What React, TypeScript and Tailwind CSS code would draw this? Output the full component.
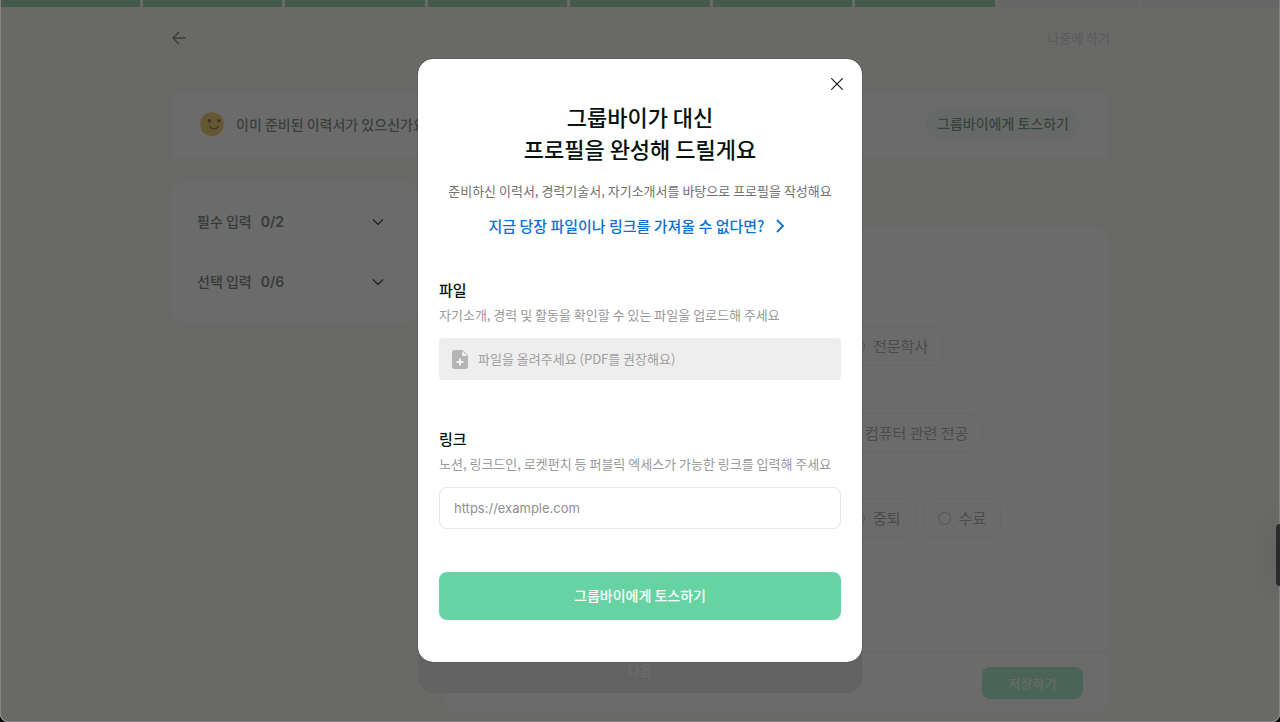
import React from "react";

const STEPS = 9;
const STEPS_DONE = 7;

const sections = [
  { label: "필수 입력", count: "0/2" },
  { label: "선택 입력", count: "0/6" },
];

function Smile() {
  return (
    <svg viewBox="0 0 24 24" className="size-6" aria-hidden="true">
      <rect x="0.300" y="0.500" width="23.400" height="23.400" rx="10.500" fill="#f0d078" />
      <circle cx="9.500" cy="8.800" r="1.800" fill="#8a7a68" />
      <circle cx="19" cy="8.800" r="1.800" fill="#8a7a68" />
      <path d="M10 14.600c1.800 3 6.600 3 8.400 0" fill="none" stroke="#8a7a68" strokeWidth="1.300" strokeLinecap="round" />
    </svg>
  );
}

function FilePlus() {
  return (
    <svg viewBox="0 0 16 19" className="h-[19px] w-4" aria-hidden="true">
      <path d="M2.500 0h8L16 5.600V16.500a2.500 2.500 0 0 1-2.500 2.500h-11A2.500 2.500 0 0 1 0 16.500v-14A2.500 2.500 0 0 1 2.500 0z" fill="#b5b5b5" />
      <path d="M10.200 1v5h5z" fill="#f4f4f4" />
      <path d="M8 8.500v7M4.500 12h7" stroke="#fff" strokeWidth="1.500" fill="none" />
    </svg>
  );
}

function Chevron() {
  return (
    <svg viewBox="0 0 12 12" className="size-3" fill="none" stroke="#444" strokeWidth="1.200" aria-hidden="true">
      <path d="M1 3.500l5 5 5-5" />
    </svg>
  );
}

function Choice({ name, label, round = false }: { name: string; label: string; round?: boolean }) {
  return (
    <label
      className={
        "flex h-10 items-center gap-2 border border-[#f3f3f3] px-[14px] text-[15px] leading-6 text-[#b4b4b4] " +
        (round ? "rounded-2xl" : "rounded-xl")
      }
    >
      <input type="radio" name={name} className="size-[13px] appearance-none rounded-full border border-[#c8c8c8]" />
      {label}
    </label>
  );
}

function ProfilePage() {
  return (
    <div className="flex min-h-screen flex-col bg-[#fafaf6]">
      <div className="flex h-[7px] gap-[3px]">
        {Array.from({ length: STEPS }, (_, i) => (
          <div key={i} className={i < STEPS_DONE ? "flex-1 bg-[#a4d6ad]" : "flex-1 bg-[#f2f2f3]"} />
        ))}
      </div>

      <header className="h-16 border-b border-[#f7f7f2] px-6">
        <div className="mx-auto flex h-[62px] max-w-[940px] items-center justify-between">
          <button type="button" aria-label="뒤로" className="p-0.5">
            <svg viewBox="0 0 14 14" className="size-[14px]" fill="none" stroke="#8f8f8c" strokeWidth="1.400" aria-hidden="true">
              <path d="M14 7H1M7 1L1 7l6 6" />
            </svg>
          </button>
          <button type="button" className="text-[13px] leading-5 text-[#d8d8da]">나중에 하기</button>
        </div>
      </header>

      <main className="mx-auto w-full max-w-[940px] pt-5">
        <section className="flex h-[68px] items-center rounded border border-[#f6f6f6] bg-white pr-7 pb-0.5 pl-[29px]">
          <Smile />
          <p className="ml-3 text-[14px] leading-5 font-medium whitespace-nowrap text-[#8a9690]">이미 준비된 이력서가 있으신가요?</p>
          <button type="button" className="ml-auto rounded-full bg-[#f4faf8] px-3 pt-[5px] pb-[7px] text-[14px] leading-5 font-medium text-[#7fa588]">
            그룹바이에게 토스하기
          </button>
        </section>

        <div className="mt-[22px] flex items-start gap-[26px]">
          <aside className="flex w-[248px] flex-none flex-col rounded-2xl bg-white py-[11px] pr-[34px] pl-[27px]">
            {sections.map((s) => (
              <button key={s.label} type="button" className="flex h-[60px] items-center text-[14px] leading-5 font-medium text-[#848d88]">
                <span className="pb-0.5">{s.label}</span>
                <span className="ml-[9px] font-['Inter',sans-serif] font-semibold">{s.count}</span>
                <span className="ml-auto">
                  <Chevron />
                </span>
              </button>
            ))}
          </aside>

          <section className="mt-[46px] flex-1 rounded-2xl bg-white">
            <div className="flex flex-col items-start pt-[99px] pb-[114px] pl-[393px]">
              <Choice name="degree" label="전문학사" />
              <div className="mt-[47px] -ml-2">
                <Choice name="major" label="컴퓨터 관련 전공" round />
              </div>
              <div className="mt-[45px] flex gap-[7px]">
                <Choice name="status" label="중퇴" />
                <Choice name="status" label="수료" />
              </div>
            </div>
            <div className="flex justify-end border-t border-[#f0f0f0] px-[27px] py-[14px]">
              <button type="button" className="h-8 w-[101px] rounded-lg bg-[#b4eed2] text-[13px] leading-5 text-white">저장하기</button>
            </div>
          </section>
        </div>
      </main>
    </div>
  );
}

function TossDialog() {
  return (
    <div
      role="dialog"
      aria-modal="true"
      aria-labelledby="toss-title"
      className="relative flex flex-col rounded-[15px] bg-white px-[21px] pb-[42px] shadow-[0_0_1px_#000]"
    >
      <div className="-mr-[6px] flex justify-end pt-[15px]">
        <button type="button" aria-label="닫기" className="p-1">
          <svg viewBox="0 0 12 12" className="size-3" fill="none" stroke="#111" strokeWidth="1.100" aria-hidden="true">
            <path d="M0.300 0.300l11.400 11.400M11.700 0.300L0.300 11.700" />
          </svg>
        </button>
      </div>

      <h1 id="toss-title" className="mt-[6px] text-center text-[22px] leading-8 font-medium text-[#04130c]">
        그룹바이가 대신
        <br />
        프로필을 완성해 드릴게요
      </h1>
      <p className="-mx-4 mt-[17px] text-center text-[13px] leading-5 whitespace-nowrap text-[#707070]">
        준비하신 이력서, 경력기술서, 자기소개서를 바탕으로 프로필을 작성해요
      </p>
      <a href="#later" className="mt-[13px] mr-2 flex items-center justify-center gap-[11px] text-[15px] leading-6 font-medium text-[#0f6fd6]">
        지금 당장 파일이나 링크를 가져올 수 없다면?
        <svg viewBox="0 0 8 14" className="h-[14px] w-2" fill="none" stroke="currentColor" strokeWidth="1.800" aria-hidden="true">
          <path d="M1 1l6 6-6 6" />
        </svg>
      </a>

      <h2 className="mt-10 text-[15px] leading-6 font-medium text-[#04130c]">파일</h2>
      <p className="mt-[3px] text-[13px] leading-5 text-[#999]">자기소개, 경력 및 활동을 확인할 수 있는 파일을 업로드해 주세요</p>
      <label className="mt-[13px] flex h-[42px] items-center gap-[10px] rounded bg-[#eee] px-[13px] text-[13px] leading-5 text-[#a0a0a0]">
        <FilePlus />
        파일을 올려주세요 (PDF를 권장해요)
        <input type="file" accept=".pdf" className="sr-only" />
      </label>

      <label htmlFor="toss-link" className="mt-[47px] text-[15px] leading-6 font-medium text-[#04130c]">링크</label>
      <p className="mt-[3px] text-[13px] leading-5 whitespace-nowrap text-[#999]">
        노션, 링크드인, 로켓펀치 등 퍼블릭 엑세스가 가능한 링크를 입력해 주세요
      </p>
      <input
        id="toss-link"
        type="url"
        placeholder="https://example.com"
        className="mt-[13px] h-[42px] rounded-lg border border-[#e8e8e8] px-[14px] font-['Inter',sans-serif] text-[13px] leading-5 placeholder:text-[#8f8f93]"
      />

      <button type="button" className="mt-[43px] h-12 rounded-lg bg-[#68d3a2] pb-0.5 text-[14px] leading-5 font-medium text-white">
        그룹바이에게 토스하기
      </button>
    </div>
  );
}

export default function App() {
  return (
    <div className="bg-black font-['Noto_Sans_CJK_KR',sans-serif]">
      <div className="relative overflow-hidden rounded-b-lg">
        <ProfilePage />
        <div className="absolute inset-0 rounded-b-lg border-x border-b border-[#808080] bg-black/58">
          <div className="absolute top-[524px] -right-[5px] h-[62px] w-2 rounded-lg bg-[#2a2a2a] shadow-[0_0_24px_#0002]" />
          <div className="mx-auto mt-[59px] w-full max-w-[444px]">
            <div className="flex flex-col rounded-[15px] bg-[#636363]">
              <TossDialog />
              <button type="button" className="-mt-4 h-[47px] text-[13px] leading-5 text-[#6c6c6c]">다음</button>
            </div>
          </div>
        </div>
      </div>
    </div>
  );
}
